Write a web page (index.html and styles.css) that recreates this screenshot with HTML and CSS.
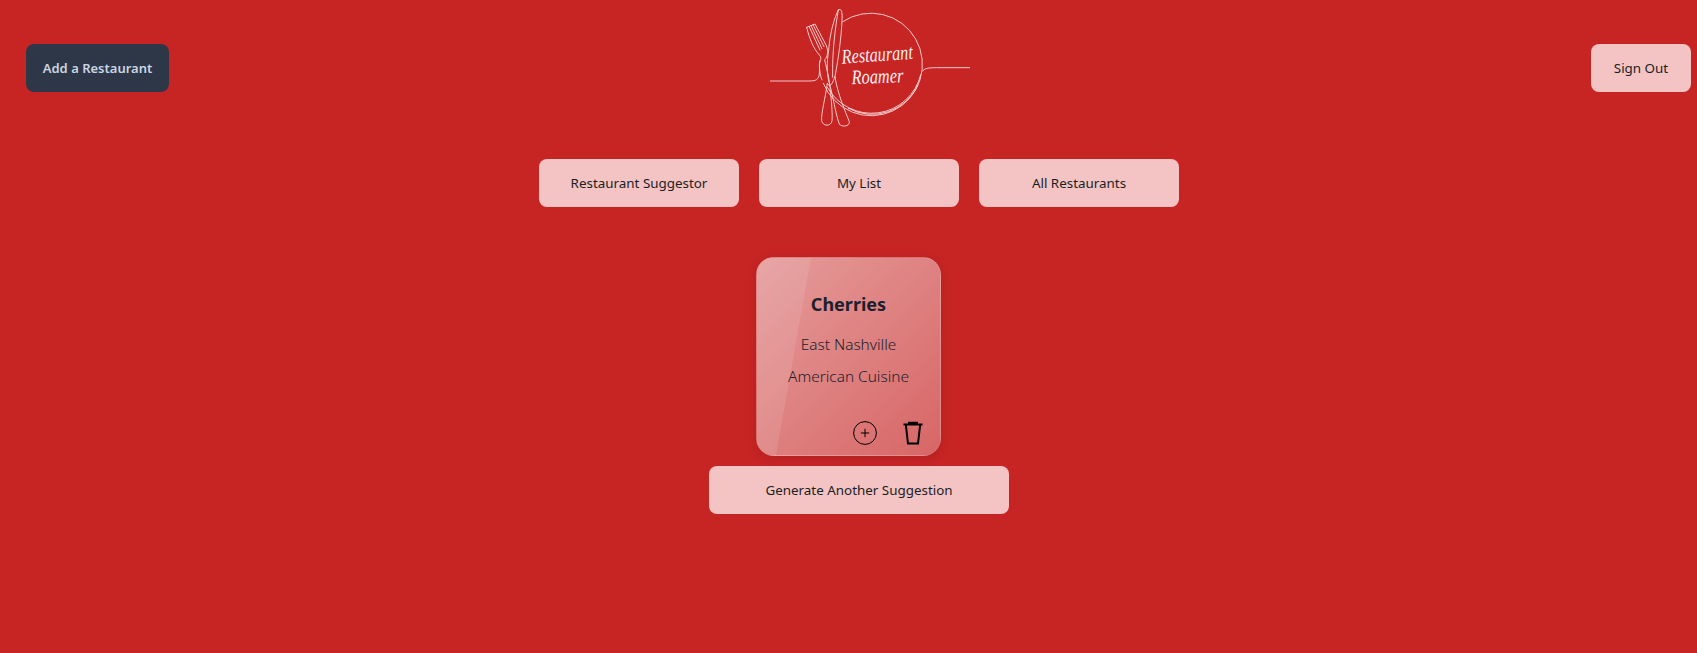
FILE: index.html
```html
<!DOCTYPE html>
<html lang="en">
<head>
<meta charset="utf-8">
<title>Restaurant Roamer</title>
<link rel="stylesheet" href="styles.css">
</head>
<body>
<header class="header">
  <button class="btn btn-dark">Add a Restaurant</button>
  <svg class="logo" viewBox="0 0 600 405" role="img" aria-label="Restaurant Roamer">
    <g class="logo-line">
      <path d="M0 243H120C138 243 146 238 148 222C150 205 146 195 150 182"/>
      <path d="M600 203H500C472 203 462 206 458 213"/>
      <path d="M218 65A154 154 0 1 1 160 250"/>
      <path d="M452 225A152 152 0 0 1 172 262"/>
      <path d="M444 255A150 150 0 0 1 235 325"/>
      <path d="M110 82L135 72L168 135C176 152 174 168 164 180C172 215 178 238 180 262C184 300 188 340 186 362C184 380 158 380 155 362C153 340 166 295 172 250"/>
      <path d="M117 79L150 150M123 77L156 146M129 74L162 140"/>
      <path d="M110 82C118 115 130 145 148 165C154 172 154 178 150 182C146 200 150 225 156 240"/>
      <path d="M205 30C213 24 218 32 216 62C214 110 206 170 195 230C202 280 228 340 238 365C240 380 214 382 208 372C196 340 190 290 178 250C170 220 170 190 176 150C180 100 192 55 205 30Z"/>
      <path d="M195 230C186 255 178 265 172 250M205 30C196 80 186 160 188 232"/>
    </g>
    <text class="logo-text" x="215" y="184" textLength="214" lengthAdjust="spacingAndGlyphs" transform="rotate(-4 320 170)">Restaurant</text>
    <text class="logo-text" x="245" y="250" textLength="155" lengthAdjust="spacingAndGlyphs" transform="rotate(-2 320 235)">Roamer</text>
  </svg>
  <button class="btn btn-signout">Sign Out</button>
</header>
<main class="main">
  <nav class="nav">
    <button class="btn btn-nav">Restaurant Suggestor</button>
    <button class="btn btn-nav">My List</button>
    <button class="btn btn-nav">All Restaurants</button>
  </nav>
  <article class="card">
    <h2 class="card-title">Cherries</h2>
    <p class="card-text">East Nashville</p>
    <p class="card-text">American Cuisine</p>
    <div class="card-actions">
      <svg class="icon" viewBox="0 0 24 24" aria-label="Add"><circle cx="12" cy="12" r="11.400"/><path d="M12 7.800V16.200M7.800 12H16.200"/></svg>
      <svg class="icon icon-trash" viewBox="0 0 24 24" aria-label="Delete"><path d="M2.500 3.500H21.500M8 3.500V1.800H16V3.500M4.800 3.500L7 22.500H17L19.200 3.500"/></svg>
    </div>
  </article>
  <button class="btn btn-generate">Generate Another Suggestion</button>
</main>
</body>
</html>
```
FILE: styles.css
```css
* {
  box-sizing: border-box;
}

html,
body {
  height: 100%;
}

body {
  margin: 0;
  overflow: hidden;
  background: #c62524;
  font-family: "Noto Sans", "Open Sans", sans-serif;
}

.header {
  display: flex;
  align-items: center;
  height: 135px;
  padding: 0 6px 0 26px;
}

.logo {
  flex: none;
  width: 200px;
  height: 135px;
  margin-left: 601px;
}

.logo-line {
  fill: none;
  stroke: #f6d4d4;
  stroke-width: 2.800;
  stroke-linecap: round;
  stroke-linejoin: round;
}

.logo-text {
  fill: #fdf0f0;
  font-family: "Liberation Serif", serif;
  font-style: italic;
  font-size: 62px;
}

.btn {
  flex: none;
  height: 48px;
  border: 0;
  border-radius: 8px;
  padding: 0;
  background: #f4c3c3;
  color: #1a1f25;
  font-family: inherit;
  font-size: 13.400px;
  font-weight: 400;
}

.btn-dark {
  width: 143px;
  background: #2d3748;
  color: #cbd5e0;
  font-size: 13px;
  font-weight: 600;
}

.btn-signout {
  width: 100px;
  margin-left: auto;
}

.main {
  display: flex;
  flex-direction: column;
  align-items: center;
  padding: 24px 0 0 21px;
}

.nav {
  display: flex;
  gap: 20px;
}

.btn-nav {
  width: 200px;
}

.card {
  position: relative;
  display: flex;
  flex-direction: column;
  align-items: center;
  width: 185px;
  height: 199px;
  margin: 50px 21px 0 0;
  padding: 31px 15px 10px;
  overflow: hidden;
  border: 1px solid rgba(255, 255, 255, 0.06);
  border-radius: 18px;
  background: linear-gradient(135deg, rgba(255, 255, 255, 0.55), rgba(255, 255, 255, 0.3));
  box-shadow: 0 2px 8px rgba(120, 20, 20, 0.25);
  color: #1a202c;
}

.card::before {
  content: "";
  position: absolute;
  inset: 0;
  background: rgba(255, 255, 255, 0.1);
  clip-path: polygon(0 0, 54px 0, 19px 100%, 0 100%);
}

.card-title {
  position: relative;
  margin: 0 0 14px;
  font-size: 18px;
  line-height: 30px;
  font-weight: 700;
}

.card-text {
  position: relative;
  margin: 0 0 9px;
  font-size: 15.400px;
  line-height: 23px;
  font-weight: 300;
}

.card-actions {
  position: relative;
  display: flex;
  gap: 24px;
  align-self: flex-end;
  margin-top: auto;
}

.icon {
  display: block;
  width: 24px;
  height: 24px;
  fill: none;
  stroke: #000;
  stroke-width: 1;
}

.icon-trash {
  stroke-width: 2;
}

.btn-generate {
  width: 300px;
  margin-top: 10px;
}
```
